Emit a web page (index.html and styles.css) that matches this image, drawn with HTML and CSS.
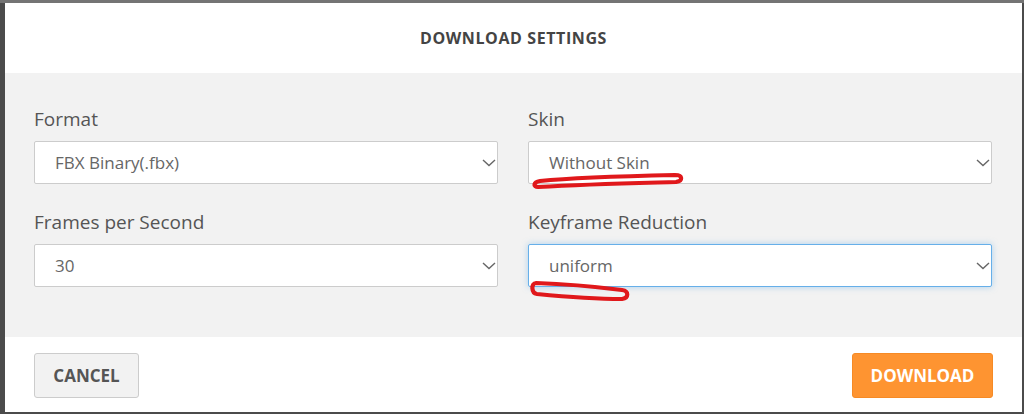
FILE: index.html
```html
<!DOCTYPE html>
<html>
<head>
<meta charset="utf-8">
<link rel="stylesheet" href="styles.css">
</head>
<body>
<div class="modal">
  <div class="modal-header">
    <h2 class="title">DOWNLOAD SETTINGS</h2>
  </div>
  <div class="modal-body">
    <div class="grid">
      <div class="field">
        <label class="label">Format</label>
        <div class="select">
          <span class="value">FBX Binary(.fbx)</span>
          <svg class="chev" width="14" height="8" viewBox="0 0 14 8"><path d="M1 1 L7 6.5 L13 1" fill="none" stroke="#666" stroke-width="1.4"/></svg>
        </div>
      </div>
      <div class="field">
        <label class="label">Skin</label>
        <div class="select">
          <span class="value">Without Skin</span>
          <svg class="chev" width="14" height="8" viewBox="0 0 14 8"><path d="M1 1 L7 6.5 L13 1" fill="none" stroke="#666" stroke-width="1.4"/></svg>
          <svg class="mark mark-skin" width="160" height="22" viewBox="0 0 160 22"><path d="M10 10 C40 7 100 5 145 4 C153 4 153 10 146 11 C110 12 60 13 8 16 C3 16 3 11 10 10" fill="none" stroke="#e0181b" stroke-width="4.2" stroke-linecap="round" stroke-linejoin="round"/></svg>
        </div>
      </div>
      <div class="field">
        <label class="label">Frames per Second</label>
        <div class="select">
          <span class="value">30</span>
          <svg class="chev" width="14" height="8" viewBox="0 0 14 8"><path d="M1 1 L7 6.5 L13 1" fill="none" stroke="#666" stroke-width="1.4"/></svg>
        </div>
      </div>
      <div class="field">
        <label class="label">Keyframe Reduction</label>
        <div class="select focus">
          <span class="value">uniform</span>
          <svg class="chev" width="14" height="8" viewBox="0 0 14 8"><path d="M1 1 L7 6.5 L13 1" fill="none" stroke="#666" stroke-width="1.4"/></svg>
          <svg class="mark mark-uni" width="110" height="28" viewBox="0 0 110 28"><path d="M8 4 C40 5 70 8 94 11 C101 12 101 19 94 20 C70 20 40 18 9 15 C3 14 3 4 8 4" fill="none" stroke="#e0181b" stroke-width="4.2" stroke-linecap="round" stroke-linejoin="round"/></svg>
        </div>
      </div>
    </div>
  </div>
  <div class="modal-footer">
    <button class="btn btn-cancel">CANCEL</button>
    <button class="btn btn-download">DOWNLOAD</button>
  </div>
</div>
</body>
</html>
```
FILE: styles.css
```css
html, body {
  margin: 0;
  padding: 0;
}
body {
  background: #4b4b4b;
  border-top: 3px solid #747474;
  font-family: "Open Sans", "Noto Sans", sans-serif;
  padding: 0 2px 0 5px;
  box-sizing: border-box;
  height: 414px;
}
.modal {
  background: #fff;
  height: 409px;
  display: flex;
  flex-direction: column;
}
.modal-header {
  height: 70px;
  display: flex;
  align-items: center;
  justify-content: center;
}
.title {
  margin: 0;
  font-size: 16px;
  font-weight: 700;
  color: #444;
  letter-spacing: 0.6px;
}
.modal-body {
  background: #f2f2f2;
  height: 264px;
  box-sizing: border-box;
  padding: 35px 30px 0 29px;
}
.grid {
  display: grid;
  grid-template-columns: 1fr 1fr;
  column-gap: 30px;
  row-gap: 27px;
}
.field {
  display: flex;
  flex-direction: column;
}
.label {
  font-size: 19px;
  line-height: 22px;
  color: #555;
  margin-bottom: 11px;
}
.select {
  position: relative;
  height: 43px;
  box-sizing: border-box;
  background: #fff;
  border: 1px solid #ccc;
  border-radius: 2px;
  display: flex;
  align-items: center;
  padding: 0 1px 0 20px;
}
.select.focus {
  border-color: #66afe9;
  box-shadow: 0 0 6px rgba(102, 175, 233, 0.5);
}
.value {
  flex: 1;
  font-size: 17px;
  color: #666;
}
.chev {
  display: block;
}
.mark {
  position: absolute;
}
.mark-skin {
  left: 1px;
  top: 29px;
}
.mark-uni {
  left: -1px;
  top: 34px;
}
.modal-footer {
  flex: 1;
  display: flex;
  justify-content: space-between;
  align-items: flex-start;
  padding: 16px 29px 0 29px;
}
.btn {
  height: 45px;
  border-radius: 3px;
  font-family: inherit;
  font-size: 17px;
  font-weight: 700;
  cursor: pointer;
}
.btn-cancel {
  width: 105px;
  background: #f2f2f2;
  border: 1px solid #ccc;
  color: #555;
}
.btn-download {
  width: 141px;
  background: #fe9431;
  border: 1px solid #f68a25;
  color: #fff;
}
```
